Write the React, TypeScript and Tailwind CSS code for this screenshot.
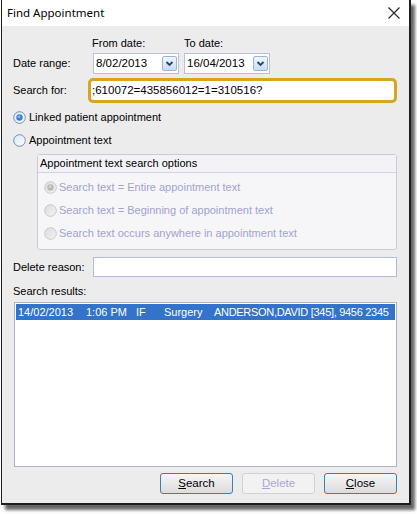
import React from "react";

const font = { fontFamily: '"Liberation Sans", Arial, sans-serif' };

function Radio({ checked, disabled }: { checked?: boolean; disabled?: boolean }) {
  const id = disabled ? "rd" : "re";
  return (
    <svg width="13" height="13" viewBox="0 0 13 13" className="shrink-0">
      <defs>
        <linearGradient id={id + "g"} x1="0" y1="0" x2="1" y2="1">
          <stop offset="0" stopColor={disabled ? "#dcdcdc" : "#d6e6f5"} />
          <stop offset="1" stopColor={disabled ? "#f4f4f4" : "#ffffff"} />
        </linearGradient>
      </defs>
      <circle cx="6.5" cy="6.5" r="5.8" fill={"url(#" + id + "g)"} stroke={disabled ? "#c8c8c8" : "#6f8fb7"} strokeWidth="1" />
      {checked && (
        <>
          <circle cx="6.5" cy="6.5" r="3.2" fill={disabled ? "#b8b8b8" : "#3c7ed2"} />
          <circle cx="6" cy="5.8" r="1.3" fill={disabled ? "#d8d8d8" : "#8fc0f0"} />
        </>
      )}
    </svg>
  );
}

function DropBtn() {
  return (
    <div className="w-[15px] h-[15px] border border-[#9db3d3] rounded-[2px] bg-gradient-to-b from-[#f2f7fd] to-[#c9dcf2] flex items-center justify-center">
      <svg width="9" height="7" viewBox="0 0 9 7">
        <path d="M1.5 2 L4.5 5 L7.5 2" fill="none" stroke="#24456f" strokeWidth="1.8" />
      </svg>
    </div>
  );
}

function DateBox({ value }: { value: string }) {
  return (
    <div className="w-[86px] h-[21px] bg-white border border-[#b9c2dc] flex items-center justify-between pl-[2px] pr-[1px]">
      <span className="text-[11.5px] text-black">{value}</span>
      <DropBtn />
    </div>
  );
}

function Btn({ u, rest, disabled }: { u: string; rest: string; disabled?: boolean }) {
  return (
    <div
      className={
        "w-[73px] h-[21px] rounded-[3px] border flex items-center justify-center text-[11.5px] " +
        (disabled
          ? "border-[#d2d2d2] bg-[#f2f2f2] text-[#a7a7d4]"
          : "border-[#3c7fb1] bg-gradient-to-b from-[#f6f6f6] to-[#dcdcdc] text-black")
      }
    >
      <span>
        <span className="underline">{u}</span>
        {rest}
      </span>
    </div>
  );
}

export default function App() {
  return (
    <div className="w-[417px] h-[514px] bg-white" style={font}>
      <div className="ml-[1px] w-[410px] h-[505px] border-l-[1.5px] border-r-2 border-b-2 border-[#1e1e1e] shadow-[4px_5px_3px_rgba(0,0,0,0.6)] bg-[#ececec] flex flex-col">
        {/* title bar */}
        <div className="h-[26px] bg-white flex items-center justify-between pl-[5px] pr-[9px]">
          <span className="text-[11.5px] text-black" style={{ fontFamily: '"Noto Sans", "Open Sans", sans-serif' }}>
            Find Appointment
          </span>
          <svg width="12" height="12" viewBox="0 0 12 12">
            <path d="M0.5 0.5 L11.5 11.5 M11.5 0.5 L0.5 11.5" stroke="#222" strokeWidth="1.1" />
          </svg>
        </div>

        <div className="flex flex-col pl-[11px] pr-[11px] text-[11px] text-black">
          {/* date labels */}
          <div className="flex mt-[10px] h-[14px] items-center">
            <span className="ml-[79px] w-[92px]">From date:</span>
            <span>To date:</span>
          </div>
          {/* date row */}
          <div className="flex items-center mt-[3px] h-[21px]">
            <span className="w-[80px]">Date range:</span>
            <DateBox value="8/02/2013" />
            <div className="w-[5px]" />
            <DateBox value="16/04/2013" />
          </div>
          {/* search for */}
          <div className="flex items-center mt-[4px] h-[25px]">
            <span className="w-[75px]">Search for:</span>
            <div className="flex-1 h-[25px] border-[3px] border-[#d9a521] rounded-[5px] bg-white flex items-center pl-[1px] mr-[1px] text-[11.5px]">
              <span>;610072=435856012=1=310516?</span>
            </div>
          </div>
          {/* radios */}
          <div className="flex items-center gap-[3px] mt-[7px] h-[14px]">
            <Radio checked />
            <span>Linked patient appointment</span>
          </div>
          <div className="flex items-center gap-[3px] mt-[9px] h-[14px]">
            <Radio />
            <span>Appointment text</span>
          </div>
          {/* group */}
          <div className="ml-[24px] mr-[1px] mt-[7px] h-[96px] border border-[#c9cbd9] rounded-[3px] bg-[#f6f6f9] flex flex-col">
            <div className="h-[18px] border-b border-[#d1d4e6] bg-[#f3f3f7] flex items-center pl-[2px]">
              Appointment text search options
            </div>
            <div className="flex flex-col pl-[6px] text-[#a1a3d2]">
              <div className="flex items-center gap-[2px] mt-[7px] h-[14px]">
                <Radio checked disabled />
                <span>Search text = Entire appointment text</span>
              </div>
              <div className="flex items-center gap-[2px] mt-[9px] h-[14px]">
                <Radio disabled />
                <span>Search text = Beginning of appointment text</span>
              </div>
              <div className="flex items-center gap-[2px] mt-[9px] h-[14px]">
                <Radio disabled />
                <span>Search text occurs anywhere in appointment text</span>
              </div>
            </div>
          </div>
          {/* delete reason */}
          <div className="flex items-center mt-[7px] h-[20px]">
            <span className="w-[80px]">Delete reason:</span>
            <div className="flex-1 h-[20px] bg-white border border-[#b3b9da] mr-[1px]" />
          </div>
          <div className="mt-[7px] h-[14px] flex items-center">Search results:</div>
          {/* list */}
          <div className="mt-[4px] ml-[1px] mr-[1px] h-[165px] bg-white border border-[#aeb2c9] p-[1px]">
            <div className="h-[16px] bg-[#3373c9] text-white flex items-center pl-[2px] whitespace-nowrap text-[11px] overflow-hidden">
              <span className="w-[68px] shrink-0">14/02/2013</span>
              <span className="w-[50px] shrink-0">1:06 PM</span>
              <span className="w-[28px] shrink-0">IF</span>
              <span className="w-[50px] shrink-0">Surgery</span>
              <span className="shrink-0 tracking-[-0.3px]">ANDERSON,DAVID [345], 9456 2345</span>
            </div>
          </div>
          {/* buttons */}
          <div className="flex justify-end gap-[9px] mt-[6px] mr-[1px]">
            <Btn u="S" rest="earch" />
            <Btn u="D" rest="elete" disabled />
            <Btn u="C" rest="lose" />
          </div>
        </div>
      </div>
    </div>
  );
}
